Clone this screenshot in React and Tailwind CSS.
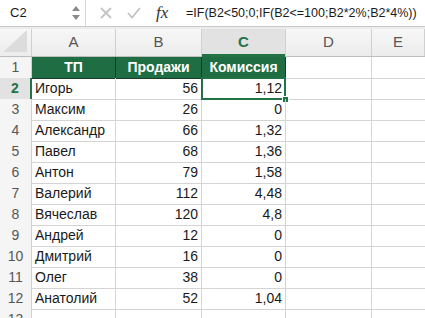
import React from "react";

const rows = [
  ["Игорь", "56", "1,12"],
  ["Максим", "26", "0"],
  ["Александр", "66", "1,32"],
  ["Павел", "68", "1,36"],
  ["Антон", "79", "1,58"],
  ["Валерий", "112", "4,48"],
  ["Вячеслав", "120", "4,8"],
  ["Андрей", "12", "0"],
  ["Дмитрий", "16", "0"],
  ["Олег", "38", "0"],
  ["Анатолий", "52", "1,04"],
];

const cols = ["A", "B", "C", "D", "E"];
const gridCols = "grid grid-cols-[32px_84px_86px_84px_86px_1fr]";

export default function App() {
  return (
    <div
      className="w-[425px] h-[318px] overflow-hidden bg-white text-[#1a1a1a]"
      style={{ fontFamily: '"Liberation Sans", Arial, sans-serif' }}
    >
      {/* formula bar */}
      <div className="h-[27px] flex items-center bg-white border-b border-[#c8c8c8]">
        <div className="w-[86px] h-full flex items-center border-r border-[#d6d6d6]">
          <span className="pl-[10px] text-[13px] flex-1">C2</span>
          <svg width="10" height="18" viewBox="0 0 10 18" className="mr-[4px]">
            <path d="M5 2 L9 7 L1 7 Z" fill="#8a8a8a" />
            <path d="M5 16 L9 11 L1 11 Z" fill="#8a8a8a" />
          </svg>
        </div>
        <div className="w-[100px] flex items-center h-full">
          <svg width="14" height="14" viewBox="0 0 14 14" className="ml-[13px]">
            <path d="M2 2 L12 12 M12 2 L2 12" stroke="#c4c4c4" strokeWidth="1.8" />
          </svg>
          <svg width="16" height="14" viewBox="0 0 16 14" className="ml-[13px]">
            <path d="M2 7 L6 11.5 L14 2" stroke="#c4c4c4" strokeWidth="1.8" fill="none" />
          </svg>
          <span
            className="ml-[14px] text-[17px] italic text-[#333]"
            style={{ fontFamily: '"Liberation Serif", serif' }}
          >
            fx
          </span>
        </div>
        <span className="text-[12.5px] whitespace-nowrap">
          =IF(B2&lt;50;0;IF(B2&lt;=100;B2*2%;B2*4%))
        </span>
      </div>
      <div className="h-[2px] bg-[#ececec]" />

      {/* column headers */}
      <div className={`${gridCols} h-[28px] border-b border-[#bdbdbd] bg-gradient-to-b from-[#f7f7f7] to-[#ececec]`}>
        <div className="relative border-r border-[#d0d0d0]">
          <svg width="26" height="24" viewBox="0 0 26 24" className="absolute right-[3px] bottom-[3px]">
            <path d="M25 1 L25 23 L1 23 Z" fill="#dcdcdc" />
          </svg>
        </div>
        {cols.map((c) => (
          <div
            key={c}
            className={
              c === "C"
                ? "flex items-center justify-center border-r border-[#d0d0d0] bg-[#e2e2e2] text-[#217346] font-bold text-[15px] relative"
                : "flex items-center justify-center border-r border-[#d0d0d0] text-[#555] text-[15px]"
            }
          >
            {c}
            {c === "C" && <div className="absolute left-0 right-0 bottom-[-1px] h-[3px] bg-[#217346]" />}
          </div>
        ))}
      </div>

      {/* row 1 header */}
      <div className={`${gridCols} h-[21px] text-[14px]`}>
        <div className="flex items-center justify-center bg-[#f5f5f5] border-r border-b border-[#d0d0d0] text-[#555]">1</div>
        <div className="flex items-center justify-center bg-[#1f6e43] border-r border-b border-[#1b3a28] text-white font-bold">ТП</div>
        <div className="flex items-center justify-center bg-[#1f6e43] border-r border-b border-[#1b3a28] text-white font-bold">Продажи</div>
        <div className="flex items-center justify-center bg-[#1f6e43] border-r border-b border-[#1b3a28] text-white font-bold">Комиссия</div>
        <div className="border-r border-b border-[#d4d4d4]" />
        <div className="border-b border-[#d4d4d4]" />
      </div>

      {rows.map((r, i) => {
        const n = i + 2;
        const sel = n === 2;
        return (
          <div key={n} className={`${gridCols} h-[21px] text-[14px]`}>
            <div
              className={
                sel
                  ? "flex items-center justify-center bg-[#e2e2e2] border-r-2 border-r-[#217346] border-b border-b-[#d0d0d0] text-[#217346] font-bold"
                  : "flex items-center justify-center bg-[#f5f5f5] border-r border-b border-[#d0d0d0] text-[#555]"
              }
            >
              {n}
            </div>
            <div className="flex items-center pl-[3px] border-r border-b border-[#d4d4d4] whitespace-nowrap">{r[0]}</div>
            <div className="flex items-center justify-end pr-[3px] border-r border-b border-[#d4d4d4]">{r[1]}</div>
            <div className="relative flex items-center justify-end pr-[3px] border-r border-b border-[#d4d4d4]">
              {r[2]}
              {sel && (
                <>
                  <div className="absolute left-[-1px] top-[-1px] right-[-1px] bottom-[-1px] border-2 border-[#217346]" />
                  <div className="absolute right-[-4px] bottom-[-4px] w-[7px] h-[7px] bg-[#217346] border border-white" />
                </>
              )}
            </div>
            <div className="border-r border-b border-[#d4d4d4]" />
            <div className="border-b border-[#d4d4d4]" />
          </div>
        );
      })}

      <div className={`${gridCols} h-[21px] text-[14px]`}>
        <div className="flex items-center justify-center bg-[#f5f5f5] border-r border-[#d0d0d0] text-[#555]">13</div>
        <div className="border-r border-[#d4d4d4]" />
        <div className="border-r border-[#d4d4d4]" />
        <div className="border-r border-[#d4d4d4]" />
        <div className="border-r border-[#d4d4d4]" />
        <div />
      </div>
    </div>
  );
}
